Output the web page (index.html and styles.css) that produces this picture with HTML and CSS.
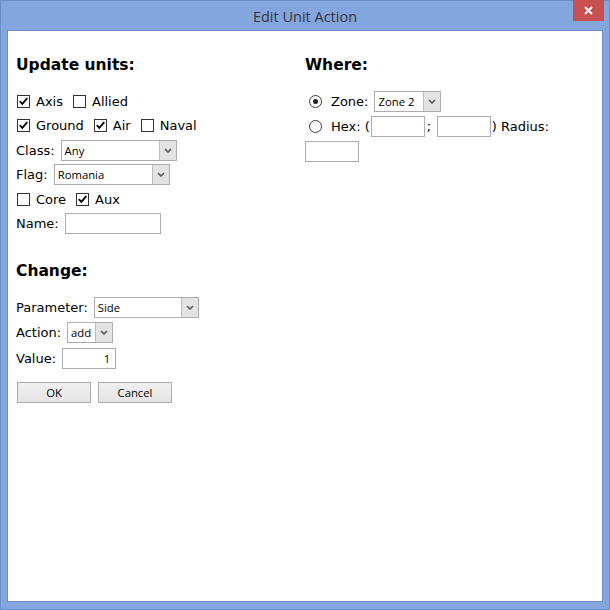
FILE: index.html
```html
<!DOCTYPE html>
<html>
<head>
<meta charset="utf-8">
<title>Edit Unit Action</title>
<link rel="stylesheet" href="styles.css">
</head>
<body>
<div class="window">
  <div class="titlebar">
    <span class="tb-side"></span>
    <span class="title">Edit Unit Action</span>
    <span class="close"><svg width="9" height="9" viewBox="0 0 9 9"><path d="M1 1L8 8M8 1L1 8" stroke="#fff" stroke-width="1.9" fill="none"/></svg></span>
  </div>
  <div class="client">
    <div class="cols">
      <section class="col">
        <h2 class="heading">Update units:</h2>
        <div class="rows">
          <div class="row">
            <label class="check"><span class="cb"><svg width="11" height="11" viewBox="0 0 11 11"><path d="M1.8 5.2L4.3 7.9L9.3 2.2" stroke="#000" stroke-width="1.8" fill="none"/></svg></span>Axis</label>
            <label class="check"><span class="cb"></span>Allied</label>
          </div>
          <div class="row">
            <label class="check"><span class="cb"><svg width="11" height="11" viewBox="0 0 11 11"><path d="M1.8 5.2L4.3 7.9L9.3 2.2" stroke="#000" stroke-width="1.8" fill="none"/></svg></span>Ground</label>
            <label class="check"><span class="cb"><svg width="11" height="11" viewBox="0 0 11 11"><path d="M1.8 5.2L4.3 7.9L9.3 2.2" stroke="#000" stroke-width="1.8" fill="none"/></svg></span>Air</label>
            <label class="check"><span class="cb"></span>Naval</label>
          </div>
          <div class="row field">
            <span class="lbl">Class:</span>
            <span class="select w116"><span class="val">Any</span><span class="arrow"><svg width="8" height="5" viewBox="0 0 8 5"><path d="M1 1L4 4L7 1" stroke="#5a5a5a" stroke-width="1.6" fill="none"/></svg></span></span>
          </div>
          <div class="row field">
            <span class="lbl">Flag:</span>
            <span class="select w116"><span class="val">Romania</span><span class="arrow"><svg width="8" height="5" viewBox="0 0 8 5"><path d="M1 1L4 4L7 1" stroke="#5a5a5a" stroke-width="1.6" fill="none"/></svg></span></span>
          </div>
          <div class="row">
            <label class="check"><span class="cb"></span>Core</label>
            <label class="check"><span class="cb"><svg width="11" height="11" viewBox="0 0 11 11"><path d="M1.8 5.2L4.3 7.9L9.3 2.2" stroke="#000" stroke-width="1.8" fill="none"/></svg></span>Aux</label>
          </div>
          <div class="row field">
            <span class="lbl">Name:</span>
            <input class="tb w96" type="text" value="">
          </div>
        </div>

        <h2 class="heading change">Change:</h2>
        <div class="rows rows2">
          <div class="row field">
            <span class="lbl">Parameter:</span>
            <span class="select w105"><span class="val">Side</span><span class="arrow"><svg width="8" height="5" viewBox="0 0 8 5"><path d="M1 1L4 4L7 1" stroke="#5a5a5a" stroke-width="1.6" fill="none"/></svg></span></span>
          </div>
          <div class="row field">
            <span class="lbl">Action:</span>
            <span class="select w45"><span class="val">add</span><span class="arrow"><svg width="8" height="5" viewBox="0 0 8 5"><path d="M1 1L4 4L7 1" stroke="#5a5a5a" stroke-width="1.6" fill="none"/></svg></span></span>
          </div>
          <div class="row field">
            <span class="lbl">Value:</span>
            <input class="tb w54 num" type="text" value="1">
          </div>
        </div>
        <div class="buttons">
          <button class="btn" type="button">OK</button>
          <button class="btn" type="button">Cancel</button>
        </div>
      </section>

      <section class="col">
        <h2 class="heading">Where:</h2>
        <div class="rows rows-r">
          <div class="row">
            <span class="radio on"></span>
            <span class="lbl">Zone:</span>
            <span class="select w67"><span class="val">Zone 2</span><span class="arrow"><svg width="8" height="5" viewBox="0 0 8 5"><path d="M1 1L4 4L7 1" stroke="#5a5a5a" stroke-width="1.6" fill="none"/></svg></span></span>
          </div>
          <div class="row">
            <span class="radio"></span>
            <span class="txt">Hex: (</span>
            <input class="tb w54 hx1" type="text" value="">
            <span class="semi">;</span>
            <input class="tb w54" type="text" value="">
            <span class="txt close-par">) Radius:</span>
          </div>
          <div class="row">
            <input class="tb w54" type="text" value="">
          </div>
        </div>
      </section>
    </div>
  </div>
</div>
</body>
</html>
```

FILE: styles.css
```css
* { box-sizing: border-box; }
html, body { margin: 0; padding: 0; }
body {
  width: 610px;
  height: 610px;
  overflow: hidden;
  font-family: "DejaVu Sans", Verdana, sans-serif;
  font-size: 13px;
  color: #000;
  background: #84a6df;
}
.window {
  width: 610px;
  height: 610px;
  border: 1px solid #6b8cc6;
  background: #84a6df;
  display: flex;
  flex-direction: column;
}
.titlebar {
  height: 29px;
  flex: none;
  display: grid;
  grid-template-columns: 1fr auto 1fr;
  align-items: start;
}
.title {
  font-family: "Open Sans", "Noto Sans", sans-serif;
  font-size: 14.5px;
  color: #353535;
  line-height: 29px;
  padding-top: 1px;
}
.close {
  justify-self: end;
  margin: -1px 5px 0 0;
  width: 31px;
  height: 21px;
  background: #c75050;
  display: flex;
  align-items: center;
  justify-content: center;
}
.client {
  flex: none;
  height: 572px;
  margin: 0 6px;
  border: 1px solid #6e8dc8;
  background: #fff;
  padding: 25px 0 0 8px;
}
.cols {
  display: grid;
  grid-template-columns: 289px 1fr;
}
.heading {
  margin: 0;
  font-size: 15.5px;
  font-weight: bold;
  line-height: 19px;
}
.heading.change { margin-top: 28px; }
.rows {
  display: flex;
  flex-direction: column;
  gap: 3.4px;
  margin-top: 16px;
}
.rows2 { gap: 4.5px; }
.rows-r { gap: 4px; }
.row {
  height: 21px;
  display: flex;
  align-items: center;
  white-space: nowrap;
}
.check {
  display: flex;
  align-items: center;
  margin-right: 10px;
}
.row > .check:first-child { margin-left: 1px; }
.cb {
  width: 13px;
  height: 13px;
  border: 1px solid #333;
  background: #fff;
  margin-right: 6px;
  display: flex;
  align-items: center;
  justify-content: center;
}
.radio {
  width: 13px;
  height: 13px;
  border: 1px solid #3a3a3a;
  border-radius: 50%;
  background: #fff;
  margin: 0 9px 0 4px;
  display: flex;
  align-items: center;
  justify-content: center;
}
.radio.on::after {
  content: "";
  width: 5px;
  height: 5px;
  border-radius: 50%;
  background: #222;
}
.lbl { margin-right: 6px; }
.select {
  display: flex;
  height: 21px;
  border: 1px solid #acacac;
  background: #fff;
  font-family: "Open Sans", "Noto Sans", sans-serif;
  font-size: 11.3px;
}
.select .val {
  flex: 1;
  padding-left: 3px;
  line-height: 19px;
  overflow: hidden;
}
.select .arrow {
  width: 17px;
  flex: none;
  background: #e3e3e3;
  border-left: 1px solid #bdbdbd;
  display: flex;
  align-items: center;
  justify-content: center;
}
.w116 { width: 116px; }
.w105 { width: 105px; }
.w67 { width: 67px; }
.w45 { width: 46px; }
.w96 { width: 96px; }
.w54 { width: 54px; }
.tb {
  height: 21px;
  margin: 0;
  border: 1px solid #abadb3;
  background: #fff;
  padding: 0 4px;
  font-family: "Open Sans", "Noto Sans", sans-serif;
  font-size: 11.3px;
  color: #000;
  outline: none;
}
.tb.num { text-align: right; padding-right: 5px; }
.hx1 { margin-left: 1px; }
.semi { margin: 0 5.5px 0 2px; }
.close-par { margin-left: 1px; white-space: pre; }
.buttons {
  display: flex;
  gap: 7px;
  margin: 13px 0 0 1px;
}
.btn {
  width: 74px;
  height: 21px;
  margin: 0;
  padding: 0;
  border: 1px solid #acacac;
  background: linear-gradient(#f0f0f0, #e5e5e5);
  font-family: "Open Sans", "Noto Sans", sans-serif;
  font-size: 11.3px;
  color: #000;
  line-height: 19px;
}
```
